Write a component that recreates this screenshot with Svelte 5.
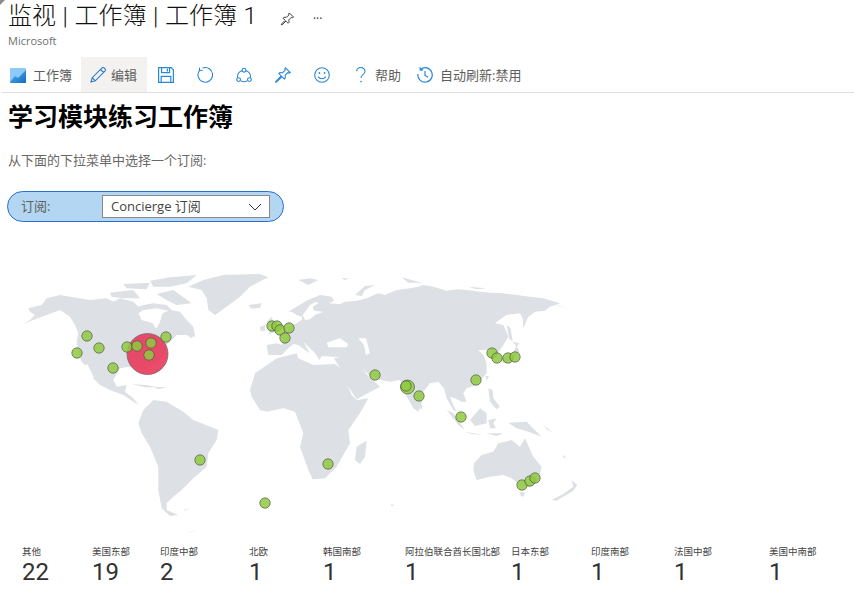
<script>
	const metrics = [
		{ label: '其他', value: 22 },
		{ label: '美国东部', value: 19 },
		{ label: '印度中部', value: 2 },
		{ label: '北欧', value: 1 },
		{ label: '韩国南部', value: 1 },
		{ label: '阿拉伯联合酋长国北部', value: 1 },
		{ label: '日本东部', value: 1 },
		{ label: '印度南部', value: 1 },
		{ label: '法国中部', value: 1 },
		{ label: '美国中南部', value: 1 }
	];

	// marker centres are in page pixels, the map's viewBox starts at the same origin
	const markers = [
		[87, 336], [99, 348], [77, 353], [113, 368], [127, 347], [137, 346], [151, 343], [149, 355],
		[166, 337], [200, 460], [265, 503], [272, 326], [277, 326], [280, 330], [289, 328], [285, 338],
		[375, 375], [406, 386], [419, 396], [461, 417], [476, 380], [492, 353], [497, 358], [508, 358],
		[515, 357], [328, 464], [522, 485], [530, 481], [535, 478]
	];

	const land = [
		'M-70 225L-40 220-25 225-18 212-30 195-15 190-5 175 5 165 20 160 35 150 38 135 45 150 60 148 75 135 100 125 72 122 68 110 85 100 78 95 60 105 45 125 35 140 20 135 5 125-5 125 20 110 50 92 90 75 125 80 132 92 118 100 150 103 165 95 200 92 230 85 265 70 285 75 300 68 320 60 360 55 385 50 400 45 430 50 470 62 500 58 530 60 570 65 600 68 640 70 680 75 720 80 760 85 810 100 780 110 765 122 735 125 715 140 700 175 698 145 690 130 650 135 635 145 615 160 640 165 655 200 640 225 630 240 612 262 600 240 565 240 580 255 590 280 590 310 560 345 530 355 520 370 530 395 515 395 495 385 480 380 490 405 500 425 490 420 470 385 462 355 445 335 420 340 400 365 395 400 385 425 370 415 345 370 330 330 300 335 270 330 240 318 218 295 232 315 270 350 200 388 145 305 150 295 132 265 150 262 95 258 88 270 75 250 60 235 40 215 60 250 45 240 25 225 10 222-5 235-25 255-65 255Z',
		'M-40 265L20 250 25 265 70 285 135 282 150 295 185 375 200 390 235 385 210 430 175 480 180 520 140 590 105 625 68 628 55 600 30 530 40 490 15 425-20 415-70 425-90 420-115 380-120 360-105 310Z',
		'M195 570L200 530 230 512 225 560 210 582Z',
		'M552 580L575 555 610 545 625 520 665 510 690 530 705 505 730 560 755 590 745 630 720 650 695 650 665 625 640 615 600 620 560 630 550 600Z',
		'M690 665L705 668 700 680 692 678Z',
		'M785 690L820 672 850 650 845 630 862 645 850 662 800 692Z',
		'M470 420L490 430 525 480 505 465Z',
		'M525 485L580 495 545 492Z',
		'M540 450L570 415 590 430 590 460 555 468Z',
		'M595 450L620 445 610 460 618 475 600 475Z',
		'M595 355L608 360 610 385 630 410 620 418 600 395Z',
		'M655 458L710 455 755 500 715 485 680 475Z',
		'M590 490L640 490 620 498Z',
		'M650 165L662 175 668 215 657 205Z',
		'M668 215L688 220 680 230Z',
		'M630 270L665 258 680 225 688 245 670 270 640 280Z',
		'M586 318L597 318 590 332Z',
		'M386 402L397 405 395 418 387 414Z',
		'M25 30L60 25 85 30 55 45Z',
		'M195 75L225 48 255 45 225 60 215 78Z',
		'M335 22L395 38 355 38Z',
		'M535 50L590 55 560 58Z',
		'M155 25L178 25 165 30Z',
		'M302 703L314 705 305 709Z',
		'M760 465L790 490 770 478Z',
		'M785 100L830 115 805 108Z',
		'M820 555L830 565 818 562Z'
	];

	const america = [
		'M40 162L60 150 75 135 60 125 55 115 95 105 110 85 150 75 190 82 240 90 290 85 310 95 330 85 370 95 385 110 400 105 430 100 470 105 490 125 440 115 400 120 385 130 395 150 430 160 440 175 450 155 458 130 480 120 510 125 530 150 550 170 555 200 530 195 500 195 480 215 470 225 465 250 450 270 420 290 400 300 355 290 330 295 310 330 320 350 350 345 345 365 370 385 385 405 375 398 340 375 300 360 270 345 245 320 225 285 215 275 205 250 200 215 205 190 195 165 180 140 150 120 110 135 70 150Z',
		'M385 460L400 420 430 390 470 395 520 425 550 450 625 480 620 510 595 550 590 590 550 625 515 660 490 680 470 700 470 720 505 735 480 738 455 715 445 660 445 590 420 530 395 490Z',
		'M535 50L580 30 640 15 750 12 775 22 720 50 690 80 650 110 615 135 595 120 590 85 575 60Z',
		'M420 32L480 22 560 15 530 40 480 50 430 50Z',
		'M340 42L420 38 410 58 350 55Z',
		'M300 68L370 60 390 85 340 85 305 80Z',
		'M440 72L490 60 545 100 500 105 470 90Z',
		'M715 105L755 100 750 113 725 116Z',
		'M365 343L410 345 440 352 405 352Z',
		'M430 350L470 352 445 358Z',
		'M770 155L785 140 800 185 775 192 785 170Z',
		'M750 170L765 165 765 182 752 183Z',
		'M530 195L555 190 545 205Z',
		'M520 720L540 715 525 722Z',
		'M532 788L560 780 545 786Z'
	];
</script>

<div class="page">
	<span class="corner"></span>
	<header>
		<div class="titlerow">
			<h1>监视 | 工作簿 | 工作簿 1</h1>
			<svg class="titlepin" width="15" height="15" viewBox="0 0 16 16" fill="none" stroke="#333" stroke-width="1">
				<path d="M10.5 1.5l4 4-1.2.6-1.2-.4-2.600 2.600.1 2.700-1 1-2.300-2.300-4 4-.8 0v-.8l4-4-2.300-2.300 1-1 2.700.1 2.600-2.600-.4-1.200z" />
			</svg>
			<span class="more">···</span>
		</div>
		<div class="sub">Microsoft</div>
	</header>

	<nav class="toolbar">
		<div class="item first">
			<svg width="16" height="16" viewBox="0 0 16 16">
				<defs>
					<linearGradient id="wb" x1="0" y1="0" x2="1" y2="1">
						<stop offset="0" stop-color="#5fb4f5" />
						<stop offset="1" stop-color="#0f6cbd" />
					</linearGradient>
				</defs>
				<rect y="1" width="16" height="15" rx="1" fill="#8ccbf8" />
				<path d="M0 15l5-6 3 2 8-8v12a1 1 0 0 1-1 1H1a1 1 0 0 1-1-1z" fill="url(#wb)" />
			</svg>
			<span>工作簿</span>
		</div>
		<div class="item edit">
			<svg width="16" height="16" viewBox="0 0 16 16" fill="none" stroke="#2b79c9" stroke-width="1.1">
				<path d="M1 15l1.200-4.300L11.800 1.100a1.800 1.800 0 0 1 2.600 0l.5.5a1.800 1.800 0 0 1 0 2.600l-9.600 9.600z M2.200 10.700l3.100 3.100 M10.500 2.400l3.100 3.100" />
			</svg>
			<span>编辑</span>
		</div>
		<div class="item icon">
			<svg width="16" height="16" viewBox="0 0 16 16" fill="none" stroke="#2b88d8" stroke-width="1.200">
				<path d="M.6.6h12.600l2.200 2.200v12.600H.6z M3.600.6v5h8v-5 M3.200 15.400V9.400h9.600v6 M9.400 1.800v2.600" />
			</svg>
		</div>
		<div class="item icon">
			<svg width="16" height="16" viewBox="0 0 16 16" fill="none" stroke="#2b88d8" stroke-width="1.100">
				<path d="M5.600 1.100A7.300 7.300 0 1 1 2.600 3.300 M2.400.6l.2 2.900 3-.2" />
			</svg>
		</div>
		<div class="item icon">
			<svg width="16" height="16" viewBox="0 0 16 16" fill="none" stroke="#2b88d8" stroke-width="1.100">
				<circle cx="8" cy="3.200" r="1.900" />
				<circle cx="2.600" cy="12.600" r="1.900" />
				<circle cx="13.400" cy="12.600" r="1.900" />
				<path d="M6.100 3.600A6.500 6.500 0 0 0 1.600 10.900 M9.900 3.600a6.500 6.500 0 0 1 4.500 7.300 M4.500 13.600a6.500 6.500 0 0 0 7 0" />
			</svg>
		</div>
		<div class="item icon">
			<svg width="16" height="16" viewBox="0 0 16 16" fill="none" stroke="#2b88d8" stroke-width="1.100">
				<path d="M10.500.8l4.700 4.700-1.200.6-1.200-.4-2.600 2.600.1 2.700-1 1-2.300-2.300-5.600 5.400-.8.2.2-.8 5.400-5.600-2.300-2.300 1-1 2.700.1 2.600-2.600-.4-1.200z" />
			</svg>
		</div>
		<div class="item icon">
			<svg width="16" height="16" viewBox="0 0 16 16" fill="none" stroke="#2b88d8" stroke-width="1.100">
				<circle cx="8" cy="8" r="7.300" />
				<circle cx="5.400" cy="6" r=".9" fill="#2b88d8" stroke="none" />
				<circle cx="10.600" cy="6" r=".9" fill="#2b88d8" stroke="none" />
				<path d="M4.200 9.600a4.400 4.400 0 0 0 7.600 0" />
			</svg>
		</div>
		<div class="item help">
			<svg width="12" height="16" viewBox="0 0 12 16" fill="none" stroke="#2b88d8" stroke-width="1.100">
				<path d="M1.600 4.200A4.200 3.900 0 1 1 8 7.600C6.400 8.600 6 9.200 6 11" />
				<circle cx="6" cy="14.600" r=".8" fill="#2b88d8" stroke="none" />
			</svg>
			<span>帮助</span>
		</div>
		<div class="item history">
			<svg width="16" height="16" viewBox="0 0 16 16" fill="none" stroke="#2b88d8" stroke-width="1.200">
				<path d="M3.400 2.400A7.200 7.200 0 1 1 .9 7 M3 .2l.3 3 3-.3 M8 4v4.400l3 1.800" />
			</svg>
			<span>自动刷新:禁用</span>
		</div>
	</nav>

	<main>
		<h2>学习模块练习工作簿</h2>
		<p>从下面的下拉菜单中选择一个订阅:</p>
		<div class="param">
			<span class="plabel">订阅:</span>
			<div class="select">
				<span>Concierge 订阅</span>
				<svg width="14" height="8" viewBox="0 0 14 8" fill="none" stroke="#333" stroke-width="1">
					<path d="M1 1l6 6 6-6" />
				</svg>
			</div>
		</div>

		<svg class="map" width="600" height="290" viewBox="0 250 600 290">
			<g fill="#dde0e4">
				<g transform="translate(10 270) scale(.3333)">
					{#each america as d}<path {d} />{/each}
					<path fill="#fff" d="M225 285L232 283 252 322 244 326Z" />
					<path fill="#fff" d="M428 160L442 160 438 176Z" />
				</g>
				<g transform="translate(290 270) scale(.3333)">
					{#each land as d}<path {d} />{/each}
					<path fill="#fff" d="M110 218L150 205 175 222 170 232 115 232Z" />
					<path fill="#fff" d="M205 205L228 205 240 250 228 255 222 225Z" />
				</g>
			</g>
			<circle class="big" cx="147.500" cy="354" r="20.500" />
			<circle class="dot" cx="407.500" cy="387" r="7" />
			{#each markers as [cx, cy]}
				<circle class="dot" {cx} {cy} r="5.200" />
			{/each}
		</svg>

		<div class="metrics">
			{#each metrics as m}
				<div class="metric">
					<div class="mlabel">{m.label}</div>
					<div class="mvalue">{m.value}</div>
				</div>
			{/each}
		</div>
	</main>
</div>

<style>
	:global(body) {
		background: #fff;
	}

	.page {
		width: 854px;
		height: 603px;
		overflow: hidden;
		position: relative;
		font-family: 'Open Sans', 'Noto Sans CJK SC', sans-serif;
		color: #605e5c;
	}

	.corner {
		position: absolute;
		left: 0;
		top: 0;
		width: 0;
		height: 0;
		border-top: 5px solid #8a8a8a;
		border-right: 5px solid transparent;
	}

	header {
		padding-left: 8px;
		height: 57px;
	}

	.titlerow {
		display: flex;
		align-items: center;
		height: 33px;
	}

	h1 {
		margin: 0;
		font-family: Roboto, 'Noto Sans CJK SC', sans-serif;
		font-size: 24px;
		line-height: 33px;
		font-weight: 300;
		word-spacing: 0.75px;
		color: #111;
		white-space: nowrap;
	}

	.titlepin {
		margin-left: 23px;
		margin-top: 5px;
	}

	.more {
		margin-left: 18px;
		margin-top: 4px;
		font-size: 12px;
		color: #333;
	}

	.sub {
		font-size: 11px;
		line-height: 14px;
		margin-top: 1px;
		color: #707070;
	}

	.toolbar {
		display: flex;
		align-items: stretch;
		height: 35px;
		margin-left: 2px;
		border-bottom: 1px solid #ddd;
		font-size: 13px;
	}

	.item {
		display: flex;
		align-items: center;
		white-space: nowrap;
	}

	.item svg {
		flex: none;
	}

	.first {
		width: 79px;
		padding-left: 8px;
		gap: 7px;
		box-sizing: border-box;
	}

	.edit {
		width: 66px;
		padding-left: 9px;
		gap: 5px;
		box-sizing: border-box;
		background: #f3f2f1;
	}

	.icon {
		width: 39px;
		padding-left: 11px;
		box-sizing: border-box;
	}

	.help {
		padding-left: 13px;
		gap: 8px;
	}

	.history {
		padding-left: 16px;
		gap: 7px;
	}

	main {
		padding-left: 8px;
	}

	h2 {
		margin: 6px 0 0;
		font-size: 25px;
		line-height: 34px;
		font-weight: 700;
		color: #000;
	}

	p {
		margin: 18px 0 0;
		font-size: 13px;
		line-height: 18px;
		color: #6a6867;
	}

	.param {
		display: flex;
		align-items: center;
		box-sizing: border-box;
		width: 277px;
		height: 31px;
		margin: 22px 0 0 -1px;
		padding-left: 13px;
		background: #b3d6f2;
		border: 1px solid #2b6fce;
		border-radius: 16px;
		font-size: 13px;
	}

	.plabel {
		width: 81px;
		flex: none;
		padding-bottom: 2px;
	}

	.select {
		display: flex;
		align-items: center;
		justify-content: space-between;
		box-sizing: border-box;
		width: 168px;
		height: 23px;
		padding: 0 7px 0 8px;
		background: #fff;
		border: 1px solid #8a8886;
		color: #444;
	}

	.select span {
		padding-bottom: 2px;
	}

	.map {
		display: block;
		margin: 28px 0 0 -8px;
	}

	.big {
		fill: #e8385a;
		fill-opacity: 0.9;
		stroke: #666;
		stroke-width: 0.7;
	}

	.dot {
		fill: #8fc93f;
		fill-opacity: 0.85;
		stroke: #4a4f40;
		stroke-opacity: 0.8;
		stroke-width: 0.8;
	}

	.metrics {
		display: grid;
		grid-template-columns: 70px 68px 89px 74px 82px 106px 80px 83px 95px 60px;
		margin: 5px 0 0 14px;
	}

	.metric {
		white-space: nowrap;
	}

	.mlabel {
		font-size: 9.500px;
		line-height: 13px;
		color: #444;
	}

	.mvalue {
		font-family: Roboto, sans-serif;
		font-size: 24px;
		line-height: 28px;
		color: #323130;
	}
</style>
